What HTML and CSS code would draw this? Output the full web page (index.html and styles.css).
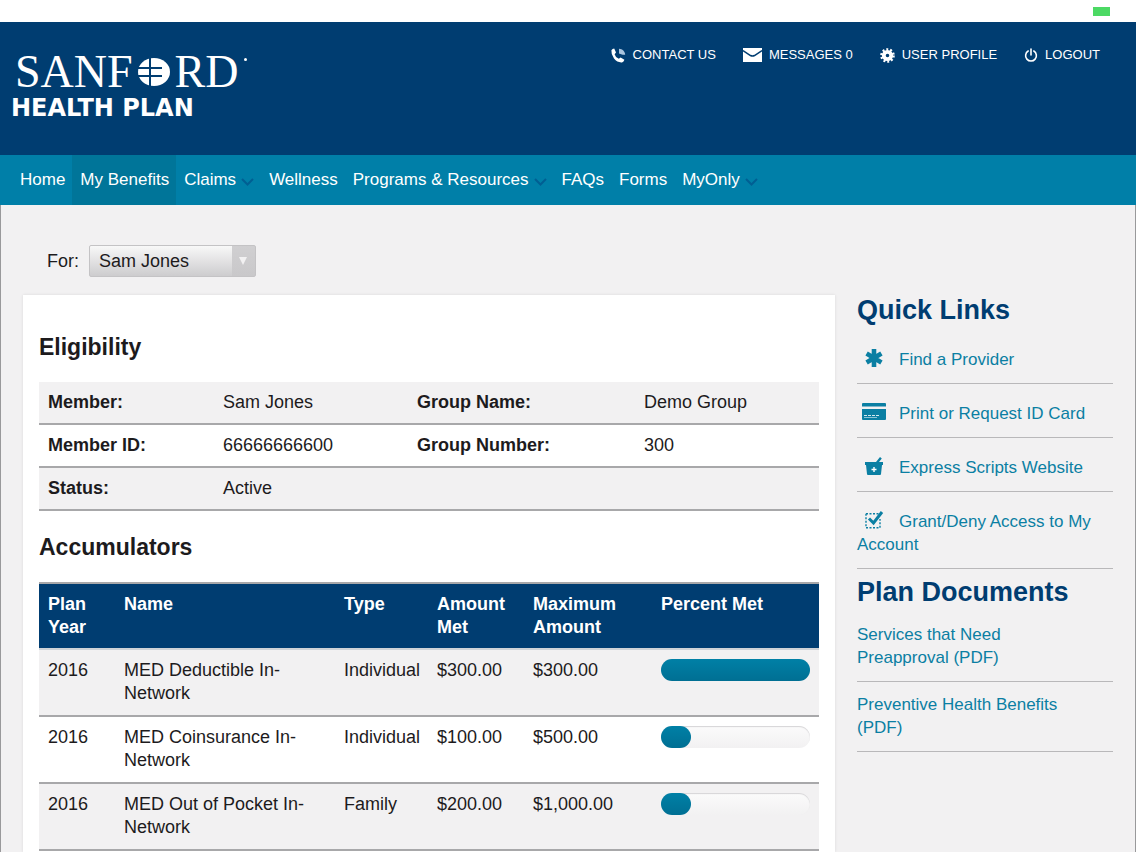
FILE: index.html
```
<!DOCTYPE html>
<html lang="en">

<head>
    <meta charset="utf-8">
    <title>Sanford Health Plan - My Benefits</title>
    <link rel="stylesheet" href="styles.css">
</head>

<body>
    <div class="status-bar"><span class="battery"></span></div>
    <header class="header">
        <a class="logo" href="#" aria-label="Sanford Health Plan">
            <span class="logo-name">
                <span>SANF</span>
                <svg class="logo-mark" viewBox="0 0 32 28" aria-hidden="true">
                    <ellipse cx="16" cy="14" rx="16" ry="14" fill="#fff" />
                    <path fill="none" stroke="#003d71" stroke-width="2" d="M12 0v28M0 10h24M0 18h24" />
                </svg>
                <span>RD</span>
                <span class="logo-dot"></span>
            </span>
            <span class="logo-sub">HEALTH PLAN</span>
        </a>
        <ul class="user-links">
            <li>
                <a href="#">
                    <svg class="icon-phone" viewBox="0 0 15 15" aria-hidden="true">
                        <path fill="#fff" d="M.4 2.200Q1.500.6 3.200.6L5 4.600 3.600 6.200q.8 3.200 4.200 4.600l1.800-1.200 3.800 2.200q-.6 2-2.400 2.600-4.600.4-8-3.800Q0 6.400.4 2.200z" />
                        <path fill="#a9c4de" d="M8 .8c3.400.2 6 2.600 6.200 6h-2.600L8 5.500z" />
                    </svg>
                    CONTACT US
                </a>
            </li>
            <li>
                <a href="#">
                    <svg class="icon-mail" viewBox="0 0 19 14" aria-hidden="true">
                        <path fill="#fff" d="M0 0h19v14H0z" />
                        <path fill="none" stroke="#003d71" stroke-width="1.500" d="M0 2.500l7.500 5q2 1.200 4 0l7.500-5" />
                    </svg>
                    MESSAGES 0
                </a>
            </li>
            <li>
                <a href="#">
                    <svg class="icon-gear" viewBox="0 0 15 15" aria-hidden="true">
                        <circle cx="7.500" cy="7.500" r="6" fill="none" stroke="#fff" stroke-width="2.600" stroke-dasharray="1.885" />
                        <circle cx="7.500" cy="7.500" r="3.700" fill="none" stroke="#fff" stroke-width="3.800" />
                    </svg>
                    USER PROFILE
                </a>
            </li>
            <li>
                <a href="#">
                    <svg class="icon-power" viewBox="0 0 14 15" aria-hidden="true">
                        <path fill="none" stroke="#fff" stroke-width="1.600" stroke-linecap="round" d="M4.200 3a5.400 5.400 0 1 0 5.600 0M7 1v6" />
                    </svg>
                    LOGOUT
                </a>
            </li>
        </ul>
    </header>

    <nav class="nav">
        <a href="#">Home</a>
        <a href="#" class="active">My Benefits</a>
        <a href="#">Claims <svg class="chevron" viewBox="0 0 13 8"><path d="M1 1l5.500 5.500L12 1" /></svg></a>
        <a href="#">Wellness</a>
        <a href="#">Programs &amp; Resources <svg class="chevron" viewBox="0 0 13 8"><path d="M1 1l5.500 5.500L12 1" /></svg></a>
        <a href="#">FAQs</a>
        <a href="#">Forms</a>
        <a href="#">MyOnly <svg class="chevron" viewBox="0 0 13 8"><path d="M1 1l5.500 5.500L12 1" /></svg></a>
    </nav>

    <div class="page">
        <form class="member-form">
            <label for="member">For:</label>
            <span class="select-box">
                <select id="member">
                    <option>Sam Jones</option>
                </select>
            </span>
        </form>

        <div class="columns">
            <main class="card">
                <h2>Eligibility</h2>
                <table class="eligibility">
                    <colgroup>
                        <col class="c-label">
                        <col class="c-value">
                        <col class="c-group">
                        <col>
                    </colgroup>
                    <tr>
                        <th scope="row">Member:</th>
                        <td>Sam Jones</td>
                        <th scope="row">Group Name:</th>
                        <td>Demo Group</td>
                    </tr>
                    <tr>
                        <th scope="row">Member ID:</th>
                        <td>66666666600</td>
                        <th scope="row">Group Number:</th>
                        <td>300</td>
                    </tr>
                    <tr>
                        <th scope="row">Status:</th>
                        <td>Active</td>
                        <td></td>
                        <td></td>
                    </tr>
                </table>

                <h2>Accumulators</h2>
                <table class="accumulators">
                    <colgroup>
                        <col class="c-year">
                        <col>
                        <col class="c-type">
                        <col class="c-met">
                        <col class="c-max">
                        <col class="c-percent">
                    </colgroup>
                    <thead>
                        <tr>
                            <th>Plan Year</th>
                            <th>Name</th>
                            <th>Type</th>
                            <th>Amount Met</th>
                            <th>Maximum Amount</th>
                            <th>Percent Met</th>
                        </tr>
                    </thead>
                    <tbody>
                        <tr>
                            <td>2016</td>
                            <td>MED Deductible In-Network</td>
                            <td>Individual</td>
                            <td>$300.00</td>
                            <td>$300.00</td>
                            <td><div class="meter"><div class="meter-fill" style="width: 100%"></div></div></td>
                        </tr>
                        <tr>
                            <td>2016</td>
                            <td>MED Coinsurance In-Network</td>
                            <td>Individual</td>
                            <td>$100.00</td>
                            <td>$500.00</td>
                            <td><div class="meter"><div class="meter-fill" style="width: 20%"></div></div></td>
                        </tr>
                        <tr>
                            <td>2016</td>
                            <td>MED Out of Pocket In-Network</td>
                            <td>Family</td>
                            <td>$200.00</td>
                            <td>$1,000.00</td>
                            <td><div class="meter"><div class="meter-fill" style="width: 20%"></div></div></td>
                        </tr>
                    </tbody>
                </table>
            </main>

            <aside class="sidebar">
                <h2>Quick Links</h2>
                <ul class="quick-links">
                    <li>
                        <a href="#"><svg class="link-icon" viewBox="0 0 24 18" aria-hidden="true"><path fill="none" stroke="#0b7fa3" stroke-width="4.600" d="M12 0v18M4.600 4.500l14.800 9M19.400 4.500l-14.800 9" /></svg>Find a Provider</a>
                    </li>
                    <li>
                        <a href="#"><svg class="link-icon" viewBox="0 0 24 18" aria-hidden="true"><path fill="#0b7fa3" d="M1 0h22q1 0 1 1v2.500H0V1q0-1 1-1zM0 6h24v10q0 1-1 1H1q-1 0-1-1z" /><path fill="none" stroke="#d5e8ee" stroke-dasharray="3 1" d="M2 12.500h16" /><path stroke="#8cc3d4" d="M2 14.500h13" /></svg>Print or Request ID Card</a>
                    </li>
                    <li>
                        <a href="#"><svg class="link-icon" viewBox="0 0 24 18" aria-hidden="true"><path fill="#0b7fa3" d="M3 5h11l4-5 1.800 1.400L17 5h4v3h-1l-1 9q0 1-1 1H6q-1 0-1-1L4 8H3z" /><path stroke="#fff" stroke-width="1.400" d="M12 10v5M9.500 12.500h5" /></svg>Express Scripts Website</a>
                    </li>
                    <li>
                        <a href="#"><svg class="link-icon" viewBox="0 0 24 18" aria-hidden="true"><path fill="none" stroke="#0b7fa3" stroke-width="1.400" stroke-dasharray="2 1.500" d="M4 2.700h14M4 2.700v14h14V8" /><path fill="none" stroke="#0b7fa3" stroke-width="3" d="M7 7.500l4.500 4.500L20 1" /></svg>Grant/Deny Access to My Account</a>
                    </li>
                </ul>
                <h2>Plan Documents</h2>
                <ul class="documents">
                    <li><a href="#">Services that Need Preapproval (PDF)</a></li>
                    <li><a href="#">Preventive Health Benefits (PDF)</a></li>
                </ul>
            </aside>
        </div>
    </div>
</body>

</html>
```
FILE: styles.css
```
* {
    box-sizing: border-box;
}

body {
    display: flex;
    flex-direction: column;
    min-height: 100vh;
    margin: 0;
    background-color: #f2f1f2;
    color: #1d1b1d;
    font-family: "Liberation Sans", Arial, sans-serif;
    font-size: 18px;
    line-height: 23px;
}

h2,
ul {
    margin: 0;
    padding: 0;
}

ul {
    list-style: none;
}

a {
    color: #0b7fa3;
    text-decoration: none;
}

.status-bar {
    display: flex;
    justify-content: flex-end;
    height: 22px;
    padding: 7px 26px;
    background-color: #fff;
}

.battery {
    width: 17px;
    height: 9px;
    background-color: #4cd964;
}

/* header */
.header {
    display: flex;
    justify-content: space-between;
    align-items: flex-start;
    height: 133px;
    padding: 21px 36px 0 11px;
    background-color: #003d71;
}

.logo {
    display: flex;
    flex-direction: column;
    padding-top: 6px;
    color: #fff;
}

.logo-name {
    display: flex;
    align-items: center;
    gap: 5px;
    padding-left: 4px;
    font-family: "Liberation Serif", serif;
    font-size: 46px;
    line-height: 46px;
}

.logo-mark {
    width: 32px;
    height: 28px;
}

.logo-dot {
    align-self: flex-start;
    width: 3px;
    height: 3px;
    margin-top: 9px;
    border-radius: 50%;
    background-color: #fff;
}

.logo-sub {
    font-family: "DejaVu Sans", sans-serif;
    font-size: 24px;
    font-weight: bold;
    line-height: 26px;
}

.user-links {
    display: flex;
    gap: 27px;
}

.user-links a {
    display: flex;
    align-items: center;
    gap: 7px;
    color: #fff;
    font-size: 13px;
    line-height: 24px;
}

.icon-phone,
.icon-gear {
    width: 15px;
    height: 15px;
}

.icon-mail {
    width: 19px;
    height: 14px;
}

.icon-power {
    width: 14px;
    height: 15px;
}

/* main menu */
.nav {
    display: flex;
    height: 50px;
    padding-left: 12px;
    background-color: #007fa8;
}

.nav a {
    display: flex;
    align-items: center;
    padding: 0 7px 2px 8px;
    color: #fff;
    font-size: 17px;
}

.nav .active {
    background-color: #007599;
}

.chevron {
    width: 13px;
    height: 8px;
    margin: 5px 0 0 5px;
    fill: none;
    stroke: #005f93;
    stroke-width: 2;
}

/* page */
.page {
    display: flex;
    flex: 1;
    flex-direction: column;
    padding: 40px 22px 0;
    border: 1px solid #99999b;
    border-width: 0 1px;
}

.member-form {
    display: flex;
    align-items: center;
    gap: 10px;
    margin-bottom: 18px;
    padding-left: 24px;
}

.select-box {
    position: relative;
}

.select-box select {
    display: block;
    width: 167px;
    height: 32px;
    padding: 0 30px 0 9px;
    border: 1px solid #c4c3c5;
    border-radius: 2px;
    appearance: none;
    background: linear-gradient(#d0cfd1, #c9c8ca) right / 23px 100% no-repeat, linear-gradient(#f8f8f8, #cdccce);
    color: #1d1b1d;
    font-family: inherit;
    font-size: 18px;
}

.select-box::after {
    content: "";
    position: absolute;
    top: 12px;
    right: 9px;
    width: 8px;
    height: 8px;
    background-color: #f2f1f2;
    clip-path: polygon(0 0, 100% 0, 50% 100%);
    pointer-events: none;
}

.columns {
    display: flex;
    flex: 1;
    gap: 22px;
}

.card {
    flex: 1;
    padding: 38px 16px 0;
    background-color: #fff;
    box-shadow: 0 0 3px rgba(0, 0, 0, .1);
}

.card h2 {
    margin-bottom: 21px;
    font-size: 23px;
    line-height: 28px;
}

table {
    width: 100%;
    border-collapse: separate;
    border-spacing: 0;
    table-layout: fixed;
}

th,
td {
    padding: 9px;
    border-bottom: 2px solid #a8a8aa;
    text-align: left;
    vertical-align: top;
}

.eligibility {
    margin-bottom: 22px;
}

.eligibility tr:nth-child(odd),
.accumulators tbody tr:nth-child(odd) {
    background-color: #f2f1f2;
}

.accumulators {
    border-top: 2px solid #a8a8aa;
}

.accumulators thead th {
    border-bottom-color: #cfd3d7;
    background-color: #003d71;
    color: #fff;
}

.accumulators tbody td {
    padding-bottom: 10px;
}

.c-label {
    width: 175px;
}

.c-value {
    width: 194px;
}

.c-group {
    width: 227px;
}

.c-year {
    width: 76px;
}

.c-type {
    width: 93px;
}

.c-met {
    width: 96px;
}

.c-max {
    width: 128px;
}

.c-percent {
    width: 167px;
}

.meter {
    height: 22px;
    border-radius: 11px;
    background: linear-gradient(#fbfbfb, #f2f1f2);
    box-shadow: inset 0 1px 1px #d5d4d6;
}

.meter-fill {
    height: 100%;
    border-radius: 11px;
    background: linear-gradient(#0080a6, #006f93);
}

/* sidebar */
.sidebar {
    width: 256px;
    font-size: 17px;
}

.sidebar h2 {
    margin-bottom: 5px;
    color: #003d71;
    font-size: 27px;
    line-height: 30px;
}

.sidebar li {
    padding-bottom: 12px;
    border-bottom: 1px solid #b9b8ba;
}

.quick-links {
    margin-bottom: 8px;
}

.quick-links li {
    padding-top: 18px;
}

.documents li {
    padding: 11px 30px 12px 0;
}

.link-icon {
    width: 24px;
    height: 18px;
    margin: 0 13px 0 5px;
    vertical-align: -2px;
}
```
